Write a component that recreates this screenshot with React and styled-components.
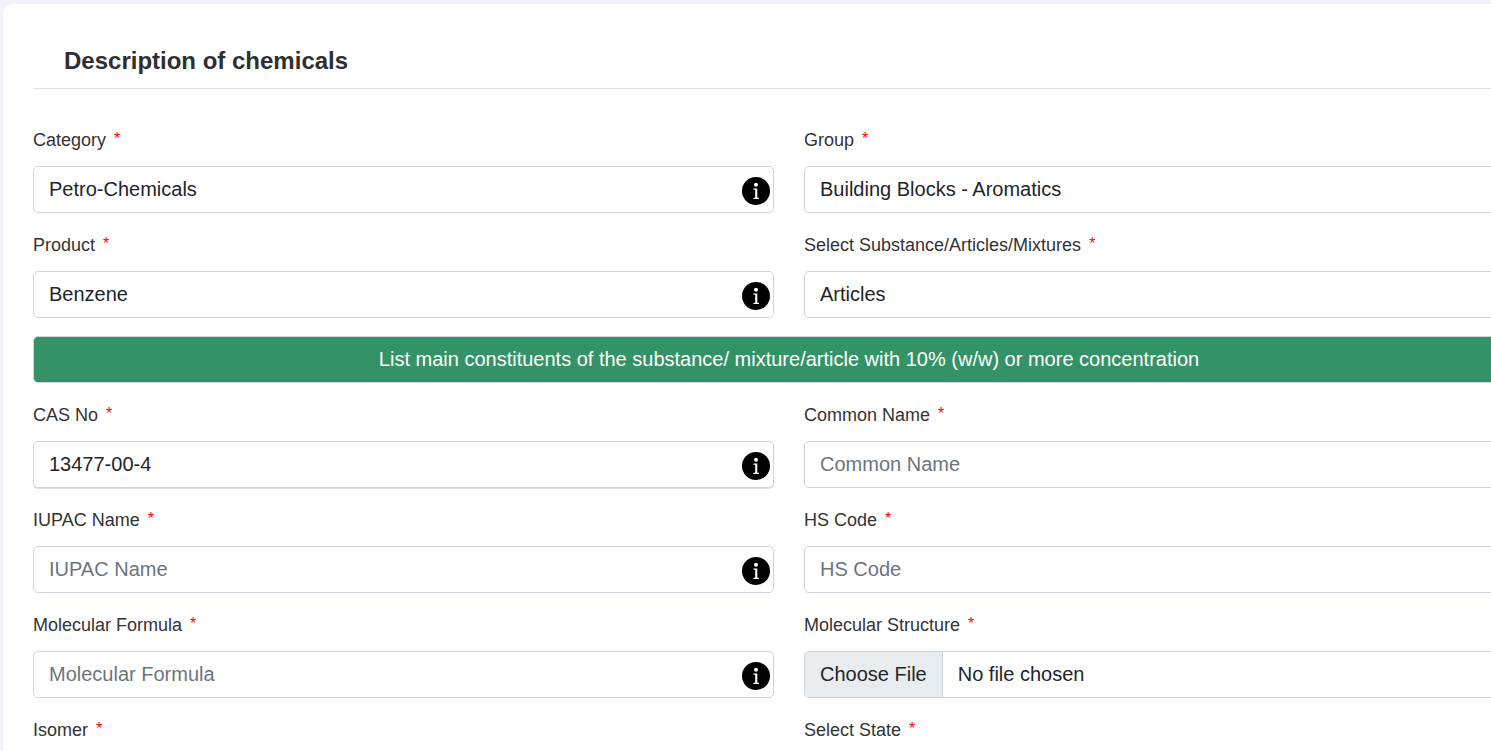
import React from "react";
import styled, { createGlobalStyle, css } from "styled-components";

const GlobalStyle = createGlobalStyle`
  *, *::before, *::after { box-sizing: border-box; }
  body {
    margin: 0;
    background: #f3f4fa;
    color: #212529;
    font-family: "Liberation Sans", Arial, sans-serif;
  }
`;

const Page = styled.div`
  height: 100vh;
  overflow: hidden;
  padding: 4px 0 0 3px;
`;

/* The form is wider than the viewport and runs off its right edge. */
const Card = styled.main`
  width: calc(100% + 84px);
  min-height: 100%;
  padding: 40px 30px 30px;
  background: #fff;
  border-radius: 10px 10px 0 0;
`;

const Heading = styled.h1`
  margin: 0 0 37px;
  padding: 0 31px 10px;
  border-bottom: 1px solid #dee2e6;
  color: #2f2f2f;
  font-size: 24px;
  line-height: 34px;
  font-weight: 700;
`;

const FormGrid = styled.form`
  display: grid;
  grid-template-columns: 1fr 1fr;
  gap: 18px 30px;
`;

const Field = styled.div`
  display: flex;
  flex-direction: column;
  gap: 11px;
`;

const Label = styled.label`
  color: #333;
  font-size: 18px;
  line-height: 29px;
`;

const Required = styled.span`
  margin-left: 3px;
  color: #f00;
  font-size: 16px;
  line-height: 16px;
  vertical-align: 2px;
`;

const ControlBox = styled.div`
  position: relative;
  display: flex;
`;

const control = css`
  appearance: none;
  width: 100%;
  height: 47px;
  margin: 0;
  padding: 0 15px;
  border: 1px solid #ced4da;
  border-radius: 5px;
  background: #fff;
  color: #212529;
  font-family: inherit;
  font-size: 20px;
  line-height: 30px;
`;

const TextInput = styled.input`
  ${control}
  box-shadow: ${(p) => (p.$underlined ? "0 1px 0 #dcdfe3" : "none")};
  &::placeholder {
    color: #6c757d;
    opacity: 1;
  }
`;

const SelectInput = styled.select`
  ${control}
  padding-bottom: 2px;
`;

const FileInput = styled.input`
  ${control}
  padding: 0;
  overflow: hidden;
  line-height: 45px;
  &::file-selector-button {
    height: 45px;
    margin: 0 15px 0 0;
    padding: 0 15px;
    border: 0;
    border-right: 1px solid #ced4da;
    background: #e9ecef;
    color: #212529;
    font: inherit;
  }
`;

const InfoButton = styled.button`
  position: absolute;
  top: 11px;
  right: 4px;
  display: flex;
  padding: 0;
  border: 0;
  border-radius: 50%;
  background: none;
  cursor: pointer;
`;

const Banner = styled.p`
  grid-column: 1 / -1;
  margin: 0;
  padding: 7px 15px 8px;
  border: 1px solid #ced4da;
  border-radius: 5px;
  background: #339366;
  color: #fff;
  font-size: 20px;
  line-height: 30px;
  text-align: center;
`;

function InfoIcon() {
  return (
    <svg width="28" height="28" viewBox="0 0 28 28" aria-hidden="true">
      <circle cx="14" cy="14" r="14" fill="#000" />
      <circle cx="14" cy="7.7" r="2" fill="#fff" />
      <path d="M11.4 11.6h3.9v9.2h1.7v1.2h-5.6v-1.2h1.8v-8h-1.8z" fill="#fff" />
    </svg>
  );
}

function FormField({ id, label, type = "text", value, info, underlined }) {
  return (
    <Field>
      <Label htmlFor={id}>
        {label} <Required>*</Required>
      </Label>
      <ControlBox>
        {type === "select" && (
          <SelectInput id={id} defaultValue={value}>
            <option>{value}</option>
          </SelectInput>
        )}
        {type === "text" && (
          <TextInput
            id={id}
            type="text"
            defaultValue={value}
            placeholder={label}
            $underlined={underlined}
          />
        )}
        {type === "file" && <FileInput id={id} type="file" />}
        {info && (
          <InfoButton type="button" aria-label={`About ${label}`}>
            <InfoIcon />
          </InfoButton>
        )}
      </ControlBox>
    </Field>
  );
}

export default function App() {
  return (
    <>
      <GlobalStyle />
      <Page>
        <Card>
          <Heading>Description of chemicals</Heading>
          <FormGrid>
            <FormField id="category" label="Category" type="select" value="Petro-Chemicals" info />
            <FormField id="group" label="Group" type="select" value="Building Blocks - Aromatics" />
            <FormField id="product" label="Product" value="Benzene" info />
            <FormField id="kind" label="Select Substance/Articles/Mixtures" type="select" value="Articles" />
            <Banner>
              List main constituents of the substance/ mixture/article with 10% (w/w) or more concentration
            </Banner>
            <FormField id="cas" label="CAS No" value="13477-00-4" info underlined />
            <FormField id="common-name" label="Common Name" />
            <FormField id="iupac" label="IUPAC Name" info />
            <FormField id="hs-code" label="HS Code" />
            <FormField id="formula" label="Molecular Formula" info />
            <FormField id="structure" label="Molecular Structure" type="file" />
            <FormField id="isomer" label="Isomer" />
            <FormField id="state" label="Select State" type="select" />
          </FormGrid>
        </Card>
      </Page>
    </>
  );
}
